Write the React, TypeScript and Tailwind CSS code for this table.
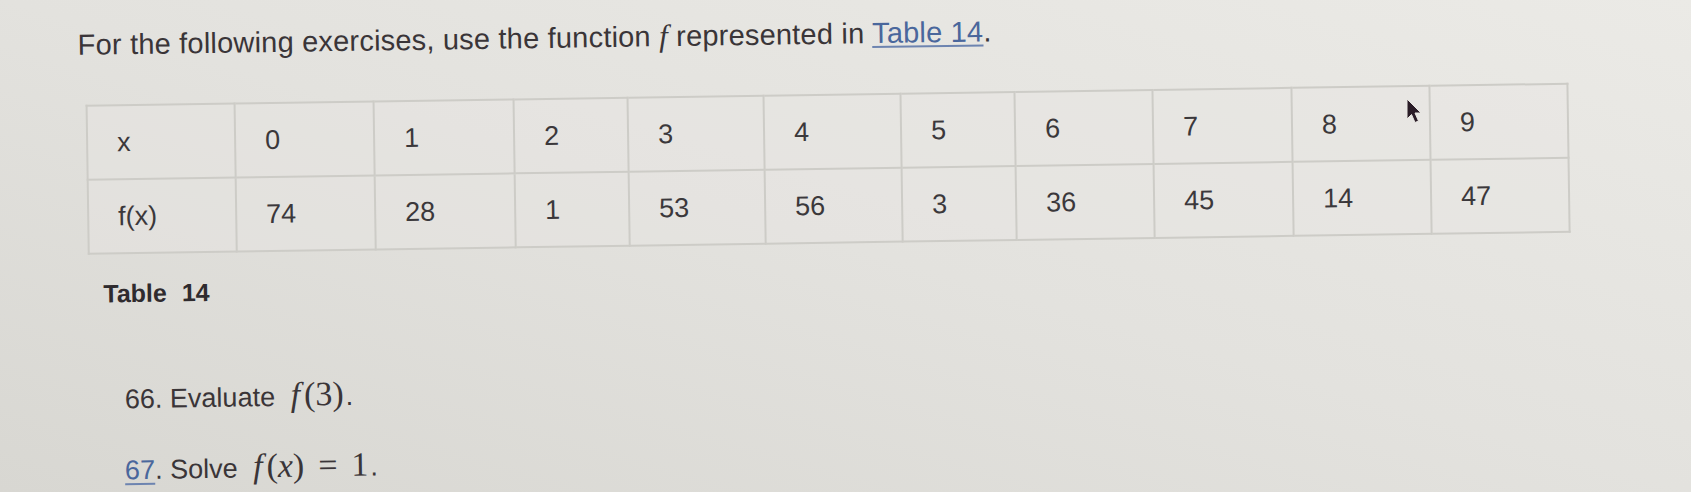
import React from "react";

const cols = [
  { x: "x", f: "f(x)", w: "w-[148px]" },
  { x: "0", f: "74", w: "w-[139px]" },
  { x: "1", f: "28", w: "w-[140px]" },
  { x: "2", f: "1", w: "w-[114px]" },
  { x: "3", f: "53", w: "w-[136px]" },
  { x: "4", f: "56", w: "w-[137px]" },
  { x: "5", f: "3", w: "w-[114px]" },
  { x: "6", f: "36", w: "w-[138px]" },
  { x: "7", f: "45", w: "w-[139px]" },
  { x: "8", f: "14", w: "w-[138px]" },
  { x: "9", f: "47", w: "w-[138px]" },
];

const sans = "font-['Liberation_Sans','Arial',sans-serif]";
const serif = "font-['Liberation_Serif','Times_New_Roman',serif]";

export default function App() {
  return (
    <div className="relative w-[1691px] h-[492px] overflow-hidden bg-linear-to-tr from-[#d8d7d2] via-[#e3e2de] to-[#ebeae6] text-[#3a3538]">
      <div className={`origin-top-left -rotate-[0.85deg] flex flex-col items-start ${sans}`}>
        <h1 className="ml-[77px] mt-[29px] text-[29px] leading-[34px] font-normal whitespace-nowrap tracking-[0.2px]">
          For the following exercises, use the function{" "}
          <span className={`${serif} italic text-[31px]`}>f</span> represented in{" "}
          <span className="text-[#4a679c] underline decoration-[2px] underline-offset-[3px] decoration-[#6d84b0]">
            Table 14
          </span>
          .
        </h1>

        <table className="ml-[84px] mt-[43px] border-collapse table-fixed text-[27px] leading-[32px] text-[#3b383b]">
          <tbody>
            <tr>
              {cols.map((c, i) => (
                <td
                  key={i}
                  className={`${c.w} h-[74px] border-2 border-[#cdccc7] pl-[29px] align-middle bg-[#e8e7e3]/40`}
                >
                  {c.x}
                </td>
              ))}
            </tr>
            <tr>
              {cols.map((c, i) => (
                <td
                  key={i}
                  className={`${c.w} h-[74px] border-2 border-[#cdccc7] pl-[29px] align-middle bg-[#e8e7e3]/40`}
                >
                  {c.f}
                </td>
              ))}
            </tr>
          </tbody>
        </table>

        <div className="ml-[99px] mt-[24px] text-[25px] leading-[30px] font-bold text-[#2f2b2e] whitespace-nowrap">
          Table<span className="ml-[15px]">14</span>
        </div>

        <p className="ml-[119px] mt-[73px] text-[27px] leading-[32px] whitespace-nowrap">
          66. Evaluate{" "}
          <span className={`${serif} text-[34px] ml-[8px]`}>
            <span className="italic">f</span>
            <span className="ml-[4px]">(3)</span>
          </span>
          <span className="ml-[2px]">.</span>
        </p>

        <p className="ml-[118px] mt-[37px] text-[27px] leading-[32px] whitespace-nowrap">
          <span className="text-[#4a679c] underline decoration-[2px] underline-offset-[4px] decoration-[#6d84b0]">67</span>. Solve{" "}
          <span className={`${serif} text-[34px] ml-[8px]`}>
            <span className="italic">f</span>
            <span className="ml-[4px]">(</span>
            <span className="italic">x</span>)<span className="mx-[14px]">=</span>1
          </span>
          <span className="ml-[2px]">.</span>
        </p>
      </div>

      <svg
        className="absolute left-[1405px] top-[98px]"
        width="18"
        height="28"
        viewBox="0 0 18 28"
      >
        <path
          d="M2 1 L2 21 L6.5 16.5 L10 24.5 L13.5 23 L10 15 L16 15 Z"
          fill="#2a1c27"
          stroke="#e8e6e2"
          strokeWidth="1"
          strokeLinejoin="round"
        />
      </svg>
    </div>
  );
}
